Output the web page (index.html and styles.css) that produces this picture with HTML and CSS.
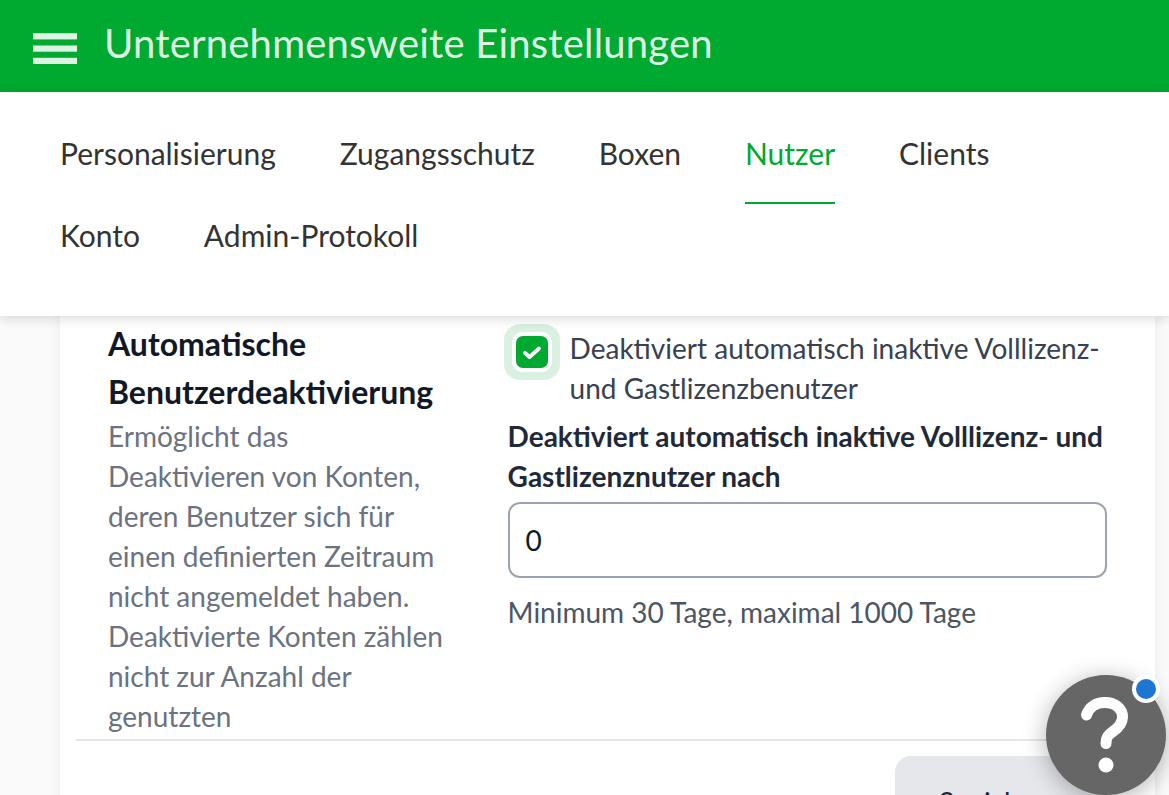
FILE: index.html
```html
<!DOCTYPE html>
<html lang="de">
<head>
<meta charset="utf-8">
<title>Unternehmensweite Einstellungen</title>
<link rel="stylesheet" href="styles.css">
</head>
<body>
<div class="page">
  <header class="topbar">
    <svg class="menu-icon" viewBox="0 0 44 32" width="44" height="32" aria-hidden="true">
      <rect x="0" y="0.2" width="44" height="6.2"/>
      <rect x="0" y="12.5" width="44" height="6.2"/>
      <rect x="0" y="24.8" width="44" height="6.2"/>
    </svg>
    <h1 class="title">Unternehmensweite Einstellungen</h1>
  </header>
  <nav class="tabs">
    <a class="tab">Personalisierung</a>
    <a class="tab">Zugangsschutz</a>
    <a class="tab">Boxen</a>
    <a class="tab tab-active">Nutzer</a>
    <a class="tab">Clients</a>
    <a class="tab">Konto</a>
    <a class="tab">Admin-Protokoll</a>
  </nav>
  <main class="content">
    <section class="card">
      <div class="row">
        <div class="col-left">
          <h2 class="row-title">Automatische Benutzerdeaktivierung</h2>
          <p class="row-desc">Ermöglicht das Deaktivieren von Konten, deren Benutzer sich für einen definierten Zeitraum nicht angemeldet haben. Deaktivierte Konten zählen nicht zur Anzahl der genutzten</p>
        </div>
        <div class="col-right">
          <label class="check-row">
            <span class="check-ring">
              <span class="check-box">
                <svg viewBox="0 0 20 20" width="20" height="20" aria-hidden="true"><path d="M3 10.8 L7.5 15 L17 6.5" fill="none" stroke="#fff" stroke-width="3.8" stroke-linecap="round" stroke-linejoin="round"/></svg>
              </span>
            </span>
            <span class="check-label">Deaktiviert automatisch inaktive Volllizenz- und Gastlizenzbenutzer</span>
          </label>
          <div class="field-label">Deaktiviert automatisch inaktive Volllizenz- und Gastlizenznutzer nach</div>
          <input class="field-input" type="text" value="0">
          <div class="field-hint">Minimum 30 Tage, maximal 1000 Tage</div>
        </div>
      </div>
      <div class="actions">
        <button class="save" type="button">Speichern</button>
      </div>
    </section>
  </main>
  <button class="help" type="button" aria-label="Hilfe">
    <svg viewBox="0 0 120 120" width="120" height="120" aria-hidden="true">
      <path d="M40.5 40 C43 32 50 27.5 59 27.5 C69 27.5 76.5 33.5 76.5 42 C76.5 49 72 53 67 56.5 C62 60 60 62 60 68.5" fill="none" stroke="#fff" stroke-width="11" stroke-linecap="round"/>
      <circle cx="60" cy="90" r="7.5" fill="#fff"/>
    </svg>
    <span class="help-dot"></span>
  </button>
</div>
</body>
</html>
```
FILE: styles.css
```css
* { box-sizing: border-box; }
html, body { margin: 0; padding: 0; height: 100%; overflow: hidden; }
body { font-family: Lato, "Noto Sans", sans-serif; color: #333; background: #fafafa; }
.page { position: relative; display: flex; flex-direction: column; height: 795px; overflow: hidden; }

.topbar { flex: none; height: 92px; background: #00a92f; display: flex; align-items: center; padding-left: 33px; gap: 28px; }
.menu-icon { fill: #dff3e4; flex: none; margin-top: 6px; }
.title { margin: 0 0 6px -1px; font-size: 40px; font-weight: 400; color: #dff3e4; line-height: 48px; letter-spacing: .2px; }

.tabs { flex: none; position: relative; z-index: 2; height: 224px; background: #fff; box-shadow: 0 2px 12px rgba(0,0,0,.16); display: flex; flex-wrap: wrap; align-content: flex-start; padding: 21px 0 0 60px; column-gap: 63.9px; row-gap: 0; width: 100%; }
.tab { display: block; height: 82px; padding-top: 20px; font-size: 30px; line-height: 40px; color: #333; border-bottom: 2px solid transparent; white-space: nowrap; }
.tabs .tab:nth-child(5) { margin-right: 150px; }
.tab-active { color: #00a92f; height: 91px; margin-bottom: -9px; padding-bottom: 0; border-bottom-color: #00a92f; }

.content { flex: 1; min-height: 0; padding: 0 14px 0 60px; overflow: hidden; }
.card { background: #fff; box-shadow: 0 0 12px rgba(0,0,0,.06); height: 600px; padding: 4px 16px 0; }
.row { display: flex; height: 421px; padding-left: 32px; border-bottom: 2px solid #e5e5ea; }
.col-left { width: 399.6px; flex: none; padding-right: 60px; }
.row-title { margin: 0; font-size: 32px; line-height: 48px; font-weight: 700; color: #111827; }
.row-desc { margin: 0; font-size: 28px; line-height: 40px; color: #6b7280; }
.col-right { flex: 1; min-width: 0; padding-right: 32px; font-size: 28px; line-height: 40px; color: #374151; }

.check-row { display: flex; gap: 10px; padding-top: 4px; }
.check-ring { flex: none; width: 56px; height: 56px; margin-left: -4px; border-radius: 16px; background: #daf0e0; display: flex; align-items: center; justify-content: center; }
.check-box { width: 32px; height: 32px; border-radius: 7px; background: #00a92f; display: flex; align-items: center; justify-content: center; box-shadow: 0 0 0 4px #fff; }
.check-label { flex: 1; margin-top: 4px; }
.field-label { font-weight: 700; color: #1f2937; margin-top: 8px; }
.field-input { display: block; width: 100%; height: 76px; margin-top: 6px; padding: 0 16px; border: 2px solid #9ca3af; border-radius: 12px; font: inherit; color: #111827; background: #fff; }
.field-hint { margin-top: 14px; color: #4b5563; }

.actions { display: flex; justify-content: flex-end; padding-top: 15px; padding-right: 35px; }
.save { height: 92px; width: 209px; border: 0; border-radius: 16px; background: #e5e7eb; color: #1f2937; font: inherit; font-size: 28px; line-height: 40px; }

.help { position: absolute; left: 1046px; top: 675px; z-index: 3; width: 120px; height: 120px; padding: 0; border: 0; border-radius: 50%; background: #666; box-shadow: 0 4px 24px rgba(0,0,0,.3); }
.help svg { display: block; }
.help-dot { position: absolute; left: 86px; top: 0; width: 28px; height: 28px; border-radius: 50%; background: #1c76d2; border: 4px solid #fff; }
```
